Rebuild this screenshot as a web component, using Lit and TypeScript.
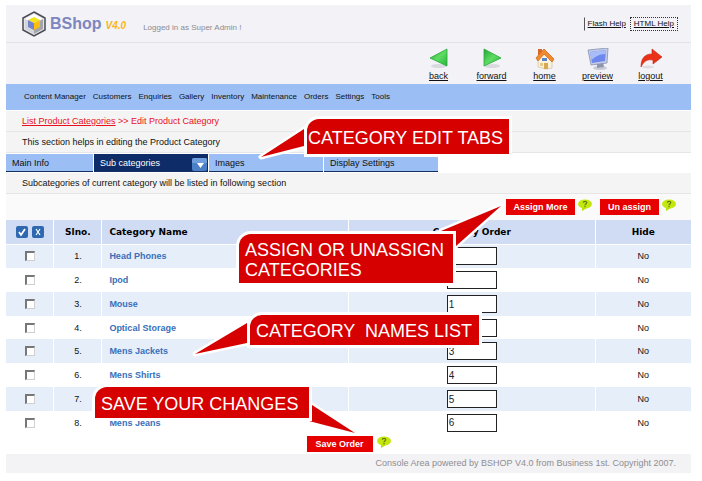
import { LitElement, html, css, svg } from "lit";
import { customElement, property } from "lit/decorators.js";

const NAV = ["Content Manager", "Customers", "Enquiries", "Gallery", "Inventory", "Maintenance", "Orders", "Settings", "Tools"];

const ROWS = [
  { name: "Head Phones", order: "" },
  { name: "Ipod", order: "" },
  { name: "Mouse", order: "1" },
  { name: "Optical Storage", order: "" },
  { name: "Mens Jackets", order: "3" },
  { name: "Mens Shirts", order: "4" },
  { name: "", order: "5" },
  { name: "Mens Jeans", order: "6" },
];

const shadow = svg`<ellipse cx="11" cy="18" rx="8" ry="2" fill="#d8dae0"/>`;

const ICONS: Record<string, unknown> = {
  back: svg`${shadow}<path d="M19 1V18L2 10Z" fill="url(#g)" stroke="#2aa83a" stroke-width=".8"/>`,
  forward: svg`${shadow}<path d="M3 1V18L20 10Z" fill="url(#g)" stroke="#2aa83a" stroke-width=".8"/>`,
  home: svg`<path d="M4 10L12 5L18 12V20L12 21L4 19Z" fill="#fbf3dc" stroke="#c9b58c" stroke-width=".6"/>
    <path d="M10 15h4v6h-4z" fill="#d9a850"/><path d="M8 10h5v3H8z" fill="#5f83c9"/><path d="M6 15h3v3H6z" fill="#e8c98a"/>
    <path d="M4 1h4v6H4z" fill="#d8682a"/><path d="M2 10L10 1L20 11L18 14L10 6L4 13Z" fill="#f08a2c" stroke="#d06a24" stroke-width=".8"/>`,
  preview: svg`<ellipse cx="13" cy="20" rx="7" ry="2" fill="#c9ccd6"/><path d="M10 15l6-1 1 5-7 1z" fill="#8f96ad"/>
    <path d="M1 2L21 0L20 15L4 17Z" fill="#c3cbe6" stroke="#8790b0" stroke-width=".8"/>
    <path d="M3 4L19 2L18 13L5 15Z" fill="#6d87ee"/><path d="M3 4L19 2L18.500 6C12 6 8 9 4.500 12Z" fill="#a8bdfa"/>`,
  logout: svg`<ellipse cx="8" cy="19" rx="6" ry="1.500" fill="#dcdce2"/>
    <path d="M1 19C1 10 5 6 12 6V1L22 9L13 16V12C7 11 4 13 1 19Z" fill="#ea3218" stroke="#c4240f" stroke-width=".6"/>`,
};

@customElement("help-tip")
export class HelpTip extends LitElement {
  static styles = css`
    :host { display: block; line-height: 0; }
    .tip { border: 0; padding: 0; background: none; display: block; }
  `;
  render() {
    return html`<button class="tip" aria-label="Help">
      <svg width="14" height="12" viewBox="0 0 14 12">
        <path d="M4 8L4 12L9 9Z" fill="#b9dc0c"/><ellipse cx="7" cy="5" rx="7" ry="4.500" fill="#c4e80f"/>
        <path d="M5.300 3.800C5.300 1.800 8.900 1.800 8.700 3.800C8.600 5 7 4.800 7 6.200M7 7v1.200" fill="none" stroke="#5f7a10" stroke-width="1.200"/>
      </svg>
    </button>`;
  }
}

@customElement("call-out")
export class CallOut extends LitElement {
  @property() tail = "";
  static styles = css`
    :host {
      display: block;
      position: absolute;
      box-sizing: border-box;
      color: #fff;
      font: 18px/20px "Liberation Sans", Arial, sans-serif;
    }
    .tail { position: absolute; left: 0; top: 0; width: 1px; height: 1px; overflow: visible; }
    .box {
      position: relative;
      box-sizing: border-box;
      height: 100%;
      display: flex;
      align-items: center;
      padding: 2px 0 0 6px;
      background: #d60000;
      border-radius: 12px 0 0 0;
      box-shadow: 0 0 0 3px #fff;
      white-space: pre;
    }
    :host(.tight) .box { padding-left: 1px; }
  `;
  render() {
    return html`
      <svg class="tail"><polygon points=${this.tail} fill="#d60000" stroke="#fff" stroke-width="5" paint-order="stroke" stroke-linejoin="round"/></svg>
      <div class="box"><slot></slot></div>`;
  }
}

@customElement("app-root")
export class AppRoot extends LitElement {
  static styles = css`
    :host {
      display: block;
      position: relative;
      padding: 5px 11px 8px 6px;
      background: #fff;
      color: #111;
      font: 9px/12px "Liberation Sans", Arial, sans-serif;
    }
    a { color: inherit; }
    .small { font-size: 8px; }
    .brand {
      display: flex;
      align-items: center;
      height: 37px;
      padding: 0 13px 0 16px;
      background: #f2f2f7;
      border-bottom: 1px solid #e2e2e8;
    }
    .name { margin-left: 4px; font-size: 16px; font-weight: bold; color: #7d86bf; }
    .version { margin: 4px 0 0 4px; font-size: 10px; font-weight: bold; font-style: italic; color: #fbb615; }
    .user { margin: 8px auto 0 17px; color: #8c8c90; }
    .help { display: flex; align-items: center; }
    .help a { padding: 0 3px; border: 1px solid transparent; }
    .help a:first-child { border-left-color: #555; }
    .help a:last-child { border: 1px dotted #333; }
    .tools {
      display: flex;
      justify-content: flex-end;
      height: 41px;
      padding: 0 14px;
      background: #f2f2f7;
    }
    .tool { display: flex; flex-direction: column; align-items: center; width: 53px; padding-top: 5px; }
    .nav {
      display: flex;
      align-items: center;
      gap: 7px;
      height: 27px;
      padding: 0 18px;
      background: #9bbef4;
      border-bottom: 1px solid #fff;
      box-sizing: border-box;
    }
    .nav a { text-decoration: none; }
    .line {
      box-sizing: border-box;
      height: 21px;
      padding: 4px 16px;
      background: #f4f4f4;
      border-bottom: 1px solid #e6e6e6;
    }
    .crumbs { color: #e8101c; }
    .tabs { display: grid; grid-template-columns: 87px repeat(3, 114px); gap: 1px; margin: 1px 0; }
    .tab {
      display: flex;
      align-items: center;
      justify-content: space-between;
      box-sizing: border-box;
      height: 18px;
      padding: 0 6px;
      border: 0;
      border-bottom: 1px solid #14305e;
      background: #9bbef4;
      color: #111;
      font: inherit;
    }
    .tab.active { background: #0d2c68; color: #fff; padding-right: 1px; }
    .tab svg { align-self: flex-end; }
    .actions {
      display: flex;
      justify-content: flex-end;
      gap: 3px;
      height: 26px;
      box-sizing: border-box;
      padding: 5px 15px 0 0;
      background: #fafafa;
    }
    .actions help-tip:not(:last-child) { margin-right: 5px; }
    .red {
      height: 16px;
      padding: 0;
      border: 0;
      background: #e60000;
      color: #fff;
      font: bold 9px/16px "Liberation Sans", Arial, sans-serif;
    }
    .wide { width: 69px; }
    .mid { width: 59px; }
    .grid { width: 100%; border-collapse: collapse; table-layout: fixed; }
    .narrow { width: 7%; }
    .broad { width: 36%; }
    .grid th, .grid td {
      height: 24px;
      padding: 0;
      box-sizing: border-box;
      text-align: center;
      border-right: 1px solid #fff;
    }
    .grid th:last-child, .grid td:last-child { border-right: 0; }
    .grid th {
      background: #cfdcf4;
      border-bottom: 1px solid #fff;
      font: bold 9px/12px "DejaVu Sans", Verdana, sans-serif;
      color: #000;
    }
    .grid tbody tr:nth-child(odd) { background: #e6eefa; }
    .grid tbody tr:nth-child(4n) td { height: 23px; }
    .grid .left { text-align: left; padding-left: 7px; }
    .cat { color: #3a6fb8; font-weight: bold; text-decoration: none; }
    .picks { display: flex; justify-content: center; gap: 4px; }
    .pick { width: 12px; height: 12px; padding: 0; border: 0; border-radius: 2px; background: #2d68b0; line-height: 0; }
    .check {
      appearance: none;
      display: block;
      box-sizing: border-box;
      width: 10px;
      height: 10px;
      margin: 0 auto;
      background: #fff;
      border: 1px solid #d0d0d0;
      border-top: 2px solid #777;
      border-left: 2px solid #777;
    }
    .order {
      display: block;
      box-sizing: border-box;
      width: 50px;
      height: 18px;
      margin: 0 auto;
      padding: 0 1px;
      border: 1px solid #222;
      border-radius: 0;
      background: #fff;
      color: #222;
      font: 10px/14px "Liberation Sans", Arial, sans-serif;
    }
    .save { display: flex; justify-content: center; gap: 4px; padding: 2px 0; }
    .save .red { width: 66px; }
    .foot {
      height: 19px;
      padding-right: 15px;
      box-sizing: border-box;
      background: #f3f2f4;
      color: #8e8e92;
      line-height: 19px;
      text-align: right;
    }
    .c1 { left: 307px; top: 119px; width: 202px; height: 35px; }
    .c2 { left: 239px; top: 234px; width: 214px; height: 49px; }
    .c3 { left: 250px; top: 315px; width: 229px; height: 30px; }
    .c4 { left: 95px; top: 387px; width: 214px; height: 31px; }
  `;

  private tool(name: string) {
    return html`<a class="tool" href="#">
      <svg width="22" height="22" viewBox="0 0 22 22">
        <defs><linearGradient id="g" x2="1" y2="1"><stop stop-color="#1fa535"/><stop offset=".5" stop-color="#5fdc62"/><stop offset="1" stop-color="#22b53a"/></linearGradient></defs>
        ${ICONS[name]}
      </svg>${name}</a>`;
  }

  render() {
    return html`
      <header>
        <div class="brand">
          <svg width="24" height="26" viewBox="0 0 24 26">
            <path d="M12 1L23 7V19L12 25L1 19V7Z" fill="#e4e4ea" stroke="#4a4a52" stroke-width="1.500"/>
            <path d="M12 3L21 8L12 13L3 8Z" fill="#fff"/><path d="M3 8L12 13V23L3 18Z" fill="#d4d4dc"/><path d="M21 8L12 13V23L21 18Z" fill="#a4a4ac"/>
            <path d="M12 6L18 9L12 12L6 9Z" fill="#f4e21c"/><path d="M6 9L12 12V19L6 16Z" fill="#7383cc"/><path d="M18 9L12 12V19L18 16Z" fill="#fbbc14"/>
          </svg>
          <span class="name">BShop</span><span class="version">V4.0</span>
          <span class="user small">Logged in as Super Admin !</span>
          <div class="help small"><a href="#">Flash Help</a><a href="#">HTML Help</a></div>
        </div>
        <div class="tools">${["back", "forward", "home", "preview", "logout"].map((n) => this.tool(n))}</div>
        <nav class="nav small">${NAV.map((n) => html`<a href="#">${n}</a>`)}</nav>
      </header>
      <main>
        <div class="line crumbs"><a href="#">List Product Categories</a> &gt;&gt; Edit Product Category</div>
        <div class="line">This section helps in editing the Product Category</div>
        <div class="tabs">
          <button class="tab">Main Info</button>
          <button class="tab active">Sub categories
            <svg width="15" height="13" viewBox="0 0 15 13"><rect width="15" height="13" rx="2" fill="#4b80c8"/><path d="M0 2q0-2 2-2h11q2 0 2 2v3H0z" fill="#6f9cda"/><path d="M5 5h7l-3.500 5z" fill="#fff"/></svg>
          </button>
          <button class="tab">Images</button>
          <button class="tab">Display Settings</button>
        </div>
        <div class="line">Subcategories of current category will be listed in following section</div>
        <div class="actions">
          <button class="red wide">Assign More</button><help-tip></help-tip>
          <button class="red mid">Un assign</button><help-tip></help-tip>
        </div>
        <table class="grid">
          <thead>
            <tr>
              <th class="narrow"><div class="picks">
                <button class="pick" aria-label="Select all"><svg width="12" height="12"><path d="M3 6l2 3 4-6" fill="none" stroke="#fff" stroke-width="1.800"/></svg></button>
                <button class="pick" aria-label="Clear all"><svg width="12" height="12"><path d="M4 3l4 6M8 3l-4 6" fill="none" stroke="#fff" stroke-width="1.200"/></svg></button>
              </div></th>
              <th class="narrow">Slno.</th>
              <th class="broad left">Category Name</th>
              <th class="broad">Category Order</th>
              <th>Hide</th>
            </tr>
          </thead>
          <tbody>
            ${ROWS.map((r, i) => html`<tr>
              <td><input class="check" type="checkbox" aria-label="Select row ${i + 1}"></td>
              <td>${i + 1}.</td>
              <td class="left"><a class="cat" href="#">${r.name}</a></td>
              <td><input class="order" type="text" aria-label="Order of row ${i + 1}" .value=${r.order}></td>
              <td>No</td>
            </tr>`)}
          </tbody>
        </table>
        <div class="save"><button class="red">Save Order</button><help-tip></help-tip></div>
      </main>
      <footer class="foot">Console Area powered by BSHOP V4.0 from Business 1st. Copyright 2007.</footer>
      <call-out class="c1 tight" tail="-3,10 -46,38 -3,27">CATEGORY EDIT TABS</call-out>
      <call-out class="c2" tail="202,-3 262,-28 217,12">ASSIGN OR UNASSIGN
CATEGORIES</call-out>
      <call-out class="c3" tail="-3,8 -55,39 -3,28">CATEGORY  NAMES LIST</call-out>
      <call-out class="c4" tail="217,18 260,46 214,34">SAVE YOUR CHANGES</call-out>
    `;
  }
}
